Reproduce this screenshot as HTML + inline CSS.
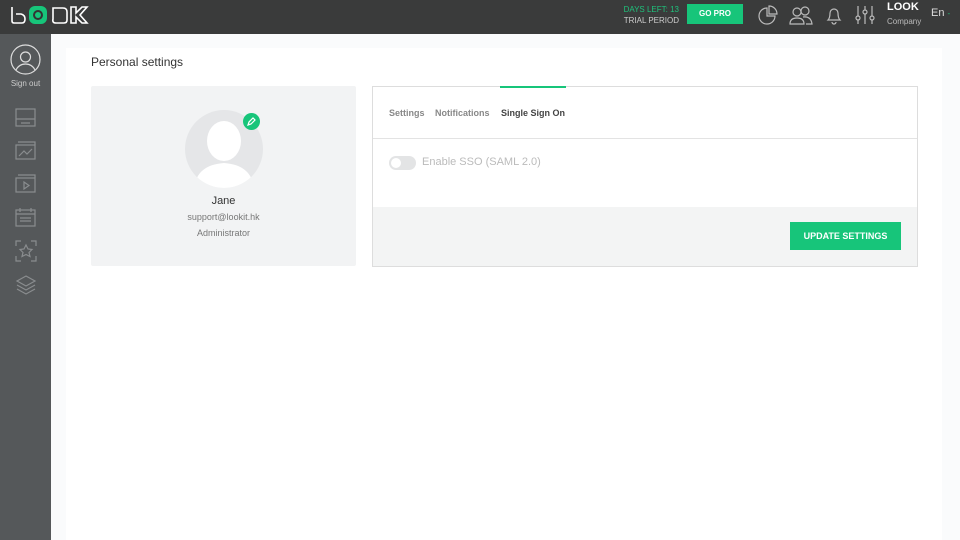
<!DOCTYPE html>
<html><head><style>
*{box-sizing:border-box;margin:0;padding:0}
body{width:960px;height:540px;overflow:hidden;font-family:"Liberation Sans",sans-serif;background:#fff;position:relative}
.top{position:absolute;left:0;top:0;width:960px;height:34px;background:#3a3b3b}
.side{position:absolute;left:0;top:34px;width:51px;height:506px;background:#55585a}
.main{position:absolute;left:51px;top:34px;width:909px;height:506px;background:#fafbfc}
.abs{position:absolute}
.ic{position:absolute;stroke:#8a8d8f;fill:none;stroke-width:1.2}
</style></head><body>
<div class="top">
 <svg class="abs" style="left:9px;top:4px" width="82" height="22" viewBox="0 0 82 22">
  <path d="M3 3v14q0 2 2 2h8q3 0 3-4t-4-5h-5" stroke="#fff" stroke-width="1.6" fill="none"/>
  <rect x="20" y="2" width="18" height="18" rx="6" fill="#17c57a"/>
  <circle cx="29" cy="11" r="5" fill="#333" /><circle cx="29" cy="11" r="3" fill="#17c57a"/>
  <path d="M44 4h10q4 0 4 4v8q0 3-3 3h-8q-4 0-3-4z" stroke="#fff" stroke-width="1.6" fill="none"/>
  <path d="M62 3h5v6l6-6h5l-7 8 7 8h-5l-6-6v6h-5z" stroke="#fff" stroke-width="1.6" fill="none"/>
 </svg>
 <div class="abs" style="left:610px;top:4px;width:69px;text-align:right;font-size:8px;line-height:11px;color:#1fc17b">DAYS LEFT: 13</div>
 <div class="abs" style="left:610px;top:15px;width:69px;text-align:right;font-size:8px;line-height:11px;color:#ccc">TRIAL PERIOD</div>
 <div class="abs" style="left:687px;top:4px;width:56px;height:20px;background:#17c57a;color:#fff;font-size:8px;font-weight:bold;text-align:center;line-height:20px">GO PRO</div>
 <svg class="abs" style="left:758px;top:5px" width="20" height="20" stroke="#bbb" fill="none" stroke-width="1.2"><path d="M9 3a8 8 0 1 0 8 8h-8z"/><path d="M11 1a8 8 0 0 1 8 8h-8z"/></svg>
 <svg class="abs" style="left:789px;top:5px" width="24" height="20" stroke="#bbb" fill="none" stroke-width="1.2"><circle cx="8" cy="7" r="4"/><path d="M1 19q0-6 7-6t7 6z"/><circle cx="16" cy="6" r="4"/><path d="M14 12q8-1 9 7h-6"/></svg>
 <svg class="abs" style="left:825px;top:5px" width="18" height="20" stroke="#bbb" fill="none" stroke-width="1.2"><path d="M3 15q2-2 2-7a4 4 0 0 1 8 0q0 5 2 7z"/><path d="M7 17a2 2 0 0 0 4 0"/></svg>
 <svg class="abs" style="left:855px;top:4px" width="20" height="22" stroke="#bbb" fill="none" stroke-width="1.2"><path d="M3 2v10M3 16v4M10 2v4M10 10v10M17 2v10M17 16v4"/><circle cx="3" cy="14" r="2"/><circle cx="10" cy="8" r="2"/><circle cx="17" cy="14" r="2"/></svg>
 <div class="abs" style="left:887px;top:1px;font-size:11px;font-weight:bold;color:#fff">LOOK</div>
 <div class="abs" style="left:887px;top:17px;font-size:8px;color:#bbb">Company</div>
 <div class="abs" style="left:931px;top:7px;font-size:11px;color:#ddd">En <span style="color:#1fc17b;font-size:8px">-</span></div>
</div>
<div class="side">
 <svg class="abs" style="left:10px;top:10px" width="31" height="31" stroke="#ddd" fill="none" stroke-width="1.2"><circle cx="15.5" cy="15.5" r="14.5"/><circle cx="15.5" cy="13" r="5"/><path d="M6 26q3-6 9.5-6t9.5 6"/></svg>
 <div class="abs" style="left:0;top:45px;width:51px;text-align:center;font-size:8px;color:#ccc">Sign out</div>
 <svg class="ic" style="left:15px;top:74px" width="22" height="20"><rect x="1" y="1" width="19" height="17"/><path d="M1 11h19M6 15h9"/></svg>
 <svg class="ic" style="left:15px;top:107px" width="22" height="20"><rect x="1" y="4" width="19" height="14"/><path d="M3 1h17v3M4 15l5-5 3 3 5-5"/></svg>
 <svg class="ic" style="left:15px;top:140px" width="22" height="20"><rect x="1" y="4" width="19" height="14"/><path d="M3 1h17v3M9 8v7l5-3.5z"/></svg>
 <svg class="ic" style="left:15px;top:173px" width="22" height="20"><rect x="1" y="3" width="19" height="16"/><path d="M1 7h19M5 1v4M16 1v4M5 11h11M5 14h11"/></svg>
 <svg class="ic" style="left:15px;top:206px" width="22" height="22"><path d="M1 6V1h5M16 1h5v5M1 16v5h5M16 21h5v-5M11 5l2 4 4 .5-3 3 1 4-4-2-4 2 1-4-3-3 4-.5z"/></svg>
 <svg class="ic" style="left:15px;top:240px" width="22" height="22"><path d="M11 2l9 5-9 5-9-5zM2 11l9 5 9-5M2 15l9 5 9-5"/></svg>
</div>
<div class="main"></div>
<div class="abs" style="left:66px;top:48px;width:876px;height:492px;background:#fff"></div>
<div class="abs" style="left:91px;top:55px;font-size:12px;color:#333">Personal settings</div>
<div class="abs" style="left:91px;top:86px;width:265px;height:180px;background:#f2f3f4;border-radius:2px"></div>
<svg class="abs" style="left:184px;top:109px" width="80" height="80"><defs><clipPath id="c"><circle cx="40" cy="40" r="39"/></clipPath></defs><circle cx="40" cy="40" r="39" fill="#e5e6e8"/><g clip-path="url(#c)" fill="#fff"><ellipse cx="40" cy="32" rx="17" ry="20"/><path d="M10 80q2-24 30-26q28 2 30 26z"/></g></svg>
<svg class="abs" style="left:243px;top:113px" width="17" height="17"><circle cx="8.5" cy="8.5" r="8.5" fill="#17c57a"/><path d="M5 12l1-3 4-4 2 2-4 4z" stroke="#fff" fill="none" stroke-width="1.2"/></svg>
<div class="abs" style="left:91px;top:195px;width:265px;text-align:center;font-size:11px;color:#333">Jane</div>
<div class="abs" style="left:91px;top:212px;width:265px;text-align:center;font-size:9px;color:#777">support@lookit.hk</div>
<div class="abs" style="left:91px;top:228px;width:265px;text-align:center;font-size:9px;color:#777">Administrator</div>
<div class="abs" style="left:372px;top:86px;width:546px;height:181px;border:1px solid #ddd;background:#fff"></div>
<div class="abs" style="left:500px;top:86px;width:66px;height:2px;background:#17c57a"></div>
<div class="abs" style="left:389px;top:108px;font-size:9px;font-weight:bold;color:#888">Settings</div>
<div class="abs" style="left:435px;top:108px;font-size:9px;font-weight:bold;color:#888">Notifications</div>
<div class="abs" style="left:501px;top:108px;font-size:9px;font-weight:bold;color:#444">Single Sign On</div>
<div class="abs" style="left:373px;top:138px;width:544px;height:1px;background:#e3e3e3"></div>
<div class="abs" style="left:389px;top:156px;width:27px;height:14px;border-radius:7px;background:#e3e4e5"></div>
<div class="abs" style="left:391px;top:158px;width:10px;height:10px;border-radius:5px;background:#fff"></div>
<div class="abs" style="left:422px;top:156px;font-size:11px;color:#bbb">Enable SSO (SAML 2.0)</div>
<div class="abs" style="left:373px;top:207px;width:544px;height:59px;background:#f3f4f4"></div>
<div class="abs" style="left:790px;top:222px;width:111px;height:28px;background:#17c57a;color:#fff;font-size:9px;font-weight:bold;text-align:center;line-height:28px">UPDATE SETTINGS</div>
</body></html>
